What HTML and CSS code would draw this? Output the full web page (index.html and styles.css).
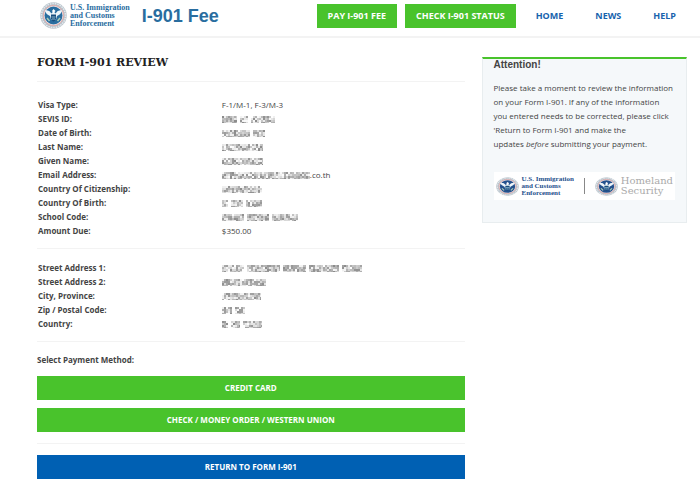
FILE: index.html
```html
<!DOCTYPE html>
<html lang="en">
<head>
<meta charset="utf-8">
<meta name="viewport" content="width=device-width, initial-scale=1">
<title>Form I-901 Review</title>
<link rel="stylesheet" href="styles.css">
</head>
<body>
<svg class="defs" aria-hidden="true">
  <symbol id="seal" viewBox="0 0 54 54" preserveAspectRatio="none">
    <circle cx="27" cy="27" r="26.500" fill="#b9c3cb"/>
    <circle cx="27" cy="27" r="24" fill="none" stroke="#e4eaee" stroke-width="3" stroke-dasharray="3 2"/>
    <circle cx="27" cy="27" r="20" fill="#f8f8f8" stroke="#e3a5a3" stroke-width="2"/>
    <circle cx="27" cy="27" r="18" fill="currentColor"/>
    <path d="M10 17Q18 15 23 23L27 18L31 23Q36 15 44 17Q42 25 34 28L32 35H22L20 28Q12 25 10 17Z" fill="#eef5f9"/>
    <path d="M22 25H32V33Q30 38 27 39Q24 38 22 33Z" fill="#194d7d"/>
    <path d="M23 30H31M24 34H30" stroke="#8db6cb" stroke-width="2"/>
    <path d="M24 18L27 14L31 18L27 22Z" fill="#fff"/>
    <path d="M14 32L19 38M40 32L35 38" stroke="#a9cbb5" stroke-width="3"/>
  </symbol>
</svg>
<header class="site-header">
  <a class="brand" href="#">
    <svg class="seal" role="img" aria-label="Department seal"><use href="#seal"/></svg>
    <span class="agency">U.S. Immigration<br>and Customs<br>Enforcement</span>
    <span class="site-name">I-901 Fee</span>
  </a>
  <nav class="nav">
    <a class="btn" href="#">PAY I-901 FEE</a>
    <a class="btn" href="#">CHECK I-901 STATUS</a>
    <a class="nav-link" href="#">HOME</a>
    <a class="nav-link" href="#">NEWS</a>
    <a class="nav-link" href="#">HELP</a>
  </nav>
</header>
<div class="page">
  <main>
    <h1>FORM I-901 REVIEW</h1>
    <table class="details applicant">
      <tbody>
      <tr><th scope="row">Visa Type:</th><td>F-1/M-1, F-3/M-3</td></tr>
      <tr><th scope="row">SEVIS ID:</th><td><span class="mask" data-runs="15 8 24"></span></td></tr>
      <tr><th scope="row">Date of Birth:</th><td><span class="mask" data-runs="28 12"></span></td></tr>
      <tr><th scope="row">Last Name:</th><td><span class="mask" data-runs="41"></span></td></tr>
      <tr><th scope="row">Given Name:</th><td><span class="mask" data-runs="41"></span></td></tr>
      <tr><th scope="row">Email Address:</th><td><span class="mask" data-runs="88"></span>.co.th</td></tr>
      <tr><th scope="row">Country Of Citizenship:</th><td><span class="mask" data-runs="40"></span></td></tr>
      <tr><th scope="row">Country Of Birth:</th><td><span class="mask" data-runs="6 12 16"></span></td></tr>
      <tr><th scope="row">School Code:</th><td><span class="mask" data-runs="22 22 26"></span></td></tr>
      <tr><th scope="row">Amount Due:</th><td>$350.00</td></tr>
      </tbody>
    </table>
    <table class="details">
      <tbody>
      <tr><th scope="row">Street Address 1:</th><td><span class="mask" data-runs="22 33 23 30 20"></span></td></tr>
      <tr><th scope="row">Street Address 2:</th><td><span class="mask" data-runs="44"></span></td></tr>
      <tr><th scope="row">City, Province:</th><td><span class="mask" data-runs="39"></span></td></tr>
      <tr><th scope="row">Zip / Postal Code:</th><td><span class="mask" data-runs="10 10"></span></td></tr>
      <tr><th scope="row">Country:</th><td><span class="mask" data-runs="6 9 19"></span></td></tr>
      </tbody>
    </table>
    <section class="payment">
      <h2>Select Payment Method:</h2>
      <button class="btn" type="button">CREDIT CARD</button>
      <button class="btn" type="button">CHECK / MONEY ORDER / WESTERN UNION</button>
    </section>
    <button class="btn btn-blue" type="button">RETURN TO FORM I-901</button>
  </main>
  <aside class="notice">
    <h2>Attention!</h2>
    <p>Please take a moment to review the information on your Form I-901. If any of the information you entered needs to be corrected, please click 'Return to Form I-901 and make the updates&nbsp;<em>before</em> submitting your payment.</p>
    <div class="logos">
      <svg class="logo-seal" role="img" aria-label="Department seal"><use href="#seal"/></svg>
      <span class="ice">U.S. Immigration<br>and Customs<br>Enforcement</span>
      <span class="divider"></span>
      <svg class="logo-seal" role="img" aria-label="Department seal"><use href="#seal"/></svg>
      <span class="dhs">Homeland<br>Security</span>
    </div>
  </aside>
</div>
<script src="mask.js"></script>
</body>
</html>
```
FILE: styles.css
```css
* { box-sizing: border-box; }
body { margin: 0; background: #fff; color: #444; font: 8px/14px "Open Sans", sans-serif; }
a { color: inherit; text-decoration: none; }
.defs { position: absolute; width: 0; height: 0; }
.site-header { display: flex; justify-content: space-between; align-items: center; padding: 2px 24px 7px 40px; border-bottom: 2px solid #f3f3f3; }
.brand { display: flex; align-items: center; color: #296d9f; }
.seal { width: 27px; height: 27px; margin-right: 3px; }
.agency { font: bold 8px/8px "Liberation Serif", serif; white-space: nowrap; }
.site-name { margin-left: 12px; font: bold 18px/24px "Liberation Sans", sans-serif; white-space: nowrap; }
.nav { display: flex; align-items: center; gap: 8px; white-space: nowrap; }
.nav-link { margin-left: 12px; margin-right: 12px; color: #1763ad; font-size: 9px; font-weight: 700; }
.nav-link:last-child { margin-right: 0; }
.btn { display: block; padding: 5px 11px; border: 0; background: #49c32c; color: #fff; font: bold 8px/14px "Open Sans", sans-serif; text-align: center; }
.nav .btn { font-size: 9px; }
.page { display: grid; grid-template-columns: 25fr 12fr; gap: 17px; align-items: start; padding: 17px 13px 12px 37px; }
h1 { margin: 0 0 10px; color: #222; font: bold 11px/16px "DejaVu Serif", serif; }
.details { width: 100%; border-collapse: separate; border-spacing: 0; table-layout: fixed; border-top: 1px solid #f3f3f3; margin-bottom: 10px; }
.details th, .details td { height: 14px; padding: 0 1px; text-align: left; vertical-align: bottom; }
.details th { width: 43%; }
.details tr:first-child > * { height: 26px; padding-top: 12px; }
.applicant tr:first-child > * { height: 30px; padding-top: 16px; }
.mask { display: inline-flex; gap: 3px; vertical-align: middle; }
.mask svg { display: block; }
.payment { border-top: 1px solid #f3f3f3; border-bottom: 1px solid #f3f3f3; padding: 11px 0; margin-bottom: 11px; }
.payment h2 { margin: 0 0 9px; font-size: 8px; line-height: 14px; }
main .btn { width: 100%; }
.payment .btn + .btn { margin-top: 8px; }
main .btn-blue { background: #0060b3; }
.notice { margin-top: 2px; border: 1px solid #e8edef; border-top: 2px solid #49c32c; background: #f5f8fa; padding: 0 11px 22px; }
.notice h2 { margin: 0 0 10px; font: bold 10px/12px "Liberation Sans", sans-serif; }
.notice p { margin: 0 0 21px; }
.logos { display: flex; align-items: center; height: 28px; padding: 0 2px; background: #fff; color: #24508c; white-space: nowrap; }
.logo-seal { width: 23px; height: 19px; flex: none; }
.ice { margin-left: 3px; font: bold 7px/7px "Liberation Serif", serif; }
.divider { width: 1px; height: 16px; margin: 0 10px; background: #888; }
.dhs { margin-left: 3px; color: #aaa; font: 10px/10px "DejaVu Serif", serif; }
```
FILE: mask.js
```js
// Draws a grey mosaic over each hidden value; data-runs lists the word widths.
let seed = 11;
function next() {
  seed = (seed * 16807) % 2147483647;
  return seed / 2147483647;
}
document.querySelectorAll(".mask").forEach(function (mask) {
  mask.dataset.runs.split(" ").map(Number).forEach(function (width) {
    let cells = "";
    for (let x = 0; x < width; x += 2) {
      for (let y = 0; y < 8; y += 2) {
        const shade = Math.round(140 + 115 * next());
        cells += `<rect x="${x}" y="${y}" width="2" height="2" fill="rgb(${shade},${shade},${shade})"/>`;
      }
    }
    mask.insertAdjacentHTML("beforeend", `<svg width="${width}" height="7" aria-hidden="true">${cells}</svg>`);
  });
});
```
